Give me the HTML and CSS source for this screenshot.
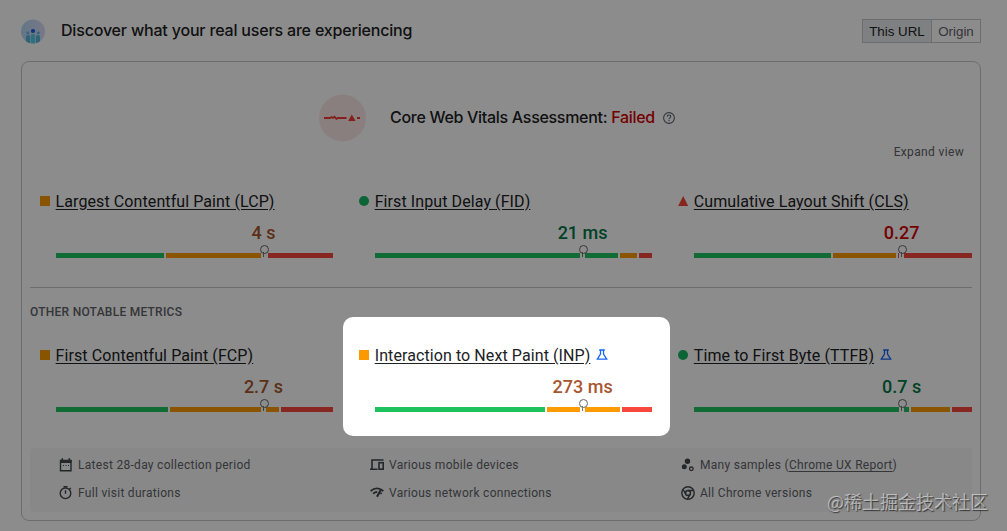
FILE: index.html
```html
<!DOCTYPE html>
<html lang="en">
<head>
<meta charset="UTF-8">
<meta name="viewport" content="width=device-width, initial-scale=1.0">
<title>Core Web Vitals Assessment</title>
<link rel="stylesheet" href="styles.css">
</head>
<body>

<div class="page">
    <header class="header">
        <svg class="header-icon" width="24" height="25" viewBox="0 0 24 25">
            <defs>
                <linearGradient id="sky" x1="0" y1="0" x2="1" y2="0">
                    <stop offset="0" stop-color="#b4d8f5"/>
                    <stop offset="1" stop-color="#dcdaf4"/>
                </linearGradient>
                <clipPath id="disc"><circle cx="12" cy="12.500" r="12"/></clipPath>
            </defs>
            <circle cx="12" cy="12.500" r="12" fill="url(#sky)"/>
            <g clip-path="url(#disc)">
                <path d="M5 18q0-2 2-2t2 2v6H5zM15 18q0-2 2-2t2 2v6h-4z" fill="#55b4da"/>
                <path d="M9.800 17q0-2 2.200-2t2.200 2v8H9.800z" fill="#55cde2"/>
                <circle cx="6.800" cy="14" r="1.400" fill="#5bb7e8"/>
                <circle cx="17.300" cy="14" r="1.400" fill="#5bb7e8"/>
                <circle cx="12" cy="12" r="2.100" fill="#1c5fe0"/>
            </g>
        </svg>
        <h1 class="header-title">Discover what your real users are experiencing</h1>
        <div class="switch">
            <button class="switch-button active">This URL</button>
            <button class="switch-button">Origin</button>
        </div>
    </header>

    <main class="panel">
        <div class="assessment">
            <svg class="assessment-icon" width="48" height="48" viewBox="0 0 48 48">
                <circle cx="24.500" cy="24" r="23.500" fill="#fbe8e7"/>
                <path d="M6 24h6l1.500-1 1.500 1 1.500-1.200 2 2 1.500-.8H28.500M39 24h3" fill="none" stroke="#f03a32" stroke-width="1.800"/>
                <path d="M33.800 20.500l3.700 6.500h-7.400z" fill="#f03a32"/>
            </svg>
            <h2 class="assessment-title">Core Web Vitals Assessment: <span class="failed">Failed</span></h2>
            <svg class="help" width="12" height="12" viewBox="0 0 12 12" fill="none" stroke="#5f6368" stroke-width="1.100">
                <circle cx="6" cy="6" r="5.400"/>
                <path d="M4.200 4.800C4.200 3.600 5 3 6 3s1.800.6 1.800 1.600C7.800 5.800 6 5.900 6 7.200M6 8v1.200"/>
            </svg>
        </div>
        <div class="expand">Expand view</div>

        <section class="metrics">
            <div class="metric average">
                <div class="metric-name"><i class="mark square"></i><a>Largest Contentful Paint (LCP)</a></div>
                <div class="metric-value">4 s</div>
                <div class="bar">
                    <span class="good" style="flex-grow: 108"></span>
                    <span class="medium" style="flex-grow: 100"></span>
                    <span class="poor" style="flex-grow: 65"></span>
                    <b class="pin"></b>
                </div>
            </div>
            <div class="metric fast">
                <div class="metric-name"><i class="mark circle"></i><a>First Input Delay (FID)</a></div>
                <div class="metric-value">21 ms</div>
                <div class="bar">
                    <span class="good" style="flex-grow: 243"></span>
                    <span class="medium" style="flex-grow: 17"></span>
                    <span class="poor" style="flex-grow: 13"></span>
                    <b class="pin"></b>
                </div>
            </div>
            <div class="metric slow">
                <div class="metric-name"><i class="mark triangle"></i><a>Cumulative Layout Shift (CLS)</a></div>
                <div class="metric-value">0.27</div>
                <div class="bar">
                    <span class="good" style="flex-grow: 137"></span>
                    <span class="medium" style="flex-grow: 63"></span>
                    <span class="poor" style="flex-grow: 74"></span>
                    <b class="pin"></b>
                </div>
            </div>
        </section>

        <h3 class="other-title">OTHER NOTABLE METRICS</h3>

        <section class="metrics">
            <div class="metric average">
                <div class="metric-name"><i class="mark square"></i><a>First Contentful Paint (FCP)</a></div>
                <div class="metric-value">2.7 s</div>
                <div class="bar">
                    <span class="good" style="flex-grow: 112"></span>
                    <span class="medium" style="flex-grow: 109"></span>
                    <span class="poor" style="flex-grow: 52"></span>
                    <b class="pin"></b>
                </div>
            </div>
            <div class="metric average">
                <div class="metric-name">
                    <i class="mark square"></i><a>Interaction to Next Paint (INP)</a>
                    <svg class="flask" width="12" height="12" viewBox="0 0 12 12"><path d="M3.200 1h5.600M4.500 1v4L1.300 10.200h9.400L7.500 5V1" fill="none" stroke="#1565f9" stroke-width="1.300"/></svg>
                </div>
                <div class="metric-value">273 ms</div>
                <div class="bar">
                    <span class="good" style="flex-grow: 170"></span>
                    <span class="medium" style="flex-grow: 73"></span>
                    <span class="poor" style="flex-grow: 30"></span>
                    <b class="pin"></b>
                </div>
            </div>
            <div class="metric fast">
                <div class="metric-name">
                    <i class="mark circle"></i><a>Time to First Byte (TTFB)</a>
                    <svg class="flask" width="12" height="12" viewBox="0 0 12 12"><path d="M3.200 1h5.600M4.500 1v4L1.300 10.200h9.400L7.500 5V1" fill="none" stroke="#1565f9" stroke-width="1.300"/></svg>
                </div>
                <div class="metric-value">0.7 s</div>
                <div class="bar">
                    <span class="good" style="flex-grow: 215"></span>
                    <span class="medium" style="flex-grow: 39"></span>
                    <span class="poor" style="flex-grow: 20"></span>
                    <b class="pin"></b>
                </div>
            </div>
        </section>

        <footer class="details">
            <div class="detail">
                <svg width="14" height="14" viewBox="0 0 14 14"><path d="M1.500 2.500h10.500v10.300H1.500z" fill="none" stroke="#424549" stroke-width="1.400"/><path d="M1 2h11.500v3H1zM2.500 .3h1.600V2H2.500zM9.500 .3h1.600V2H9.500z" fill="#424549"/><path d="M4 7.500h1M6.500 7.500h1M9 7.500h1" stroke="#424549" stroke-width="1.200"/></svg>
                Latest 28-day collection period
            </div>
            <div class="detail">
                <svg width="14" height="14" viewBox="0 0 14 14" fill="none" stroke="#424549" stroke-width="1.600"><path d="M13.500 2H2v8.500M0 11.200h7.500"/><rect x="9" y="4.700" width="4.200" height="6.500"/></svg>
                Various mobile devices
            </div>
            <div class="detail">
                <svg width="14" height="14" viewBox="0 0 14 14"><circle cx="6.500" cy="3.200" r="2.700" fill="#424549"/><circle cx="3.300" cy="8.800" r="2.500" fill="#424549"/><circle cx="10.300" cy="10.800" r="1.800" fill="none" stroke="#424549" stroke-width="1.300"/></svg>
                Many samples (<a>Chrome UX Report</a>)
            </div>
            <div class="detail">
                <svg width="14" height="14" viewBox="0 0 14 14" fill="none" stroke="#424549" stroke-width="1.400"><circle cx="6.500" cy="7.300" r="5.300"/><path d="M4.500 .7h4M6.500 4.300v3.500M10.500 3.300l1.300-1.300"/></svg>
                Full visit durations
            </div>
            <div class="detail">
                <svg width="14" height="14" viewBox="0 0 14 14" fill="none" stroke="#424549"><path d="M.6 5Q7-.2 13.400 5M3 7.600Q5 5.800 7.300 5.800" stroke-width="1.800"/><path d="M10.800 4L7 10.800" stroke-width="2.200"/><path d="M10.500 7l1.200.9" stroke-width="1.800"/></svg>
                Various network connections
            </div>
            <div class="detail">
                <svg width="14" height="14" viewBox="0 0 14 14" fill="none" stroke="#424549" stroke-width="1.400"><circle cx="7" cy="7" r="6.200"/><circle cx="7" cy="7" r="2.500"/><path d="M7 4.500h5.500M4.800 8.200L2 3.500M9.200 8.200L6.500 13"/></svg>
                All Chrome versions
            </div>
        </footer>
    </main>
</div>

<!-- dims everything except the INP card -->
<div class="spotlight"></div>
<div class="watermark">@稀土掘金技术社区</div>

</body>
</html>
```
FILE: styles.css
```css
* {
    box-sizing: border-box;
}

body {
    margin: 0;
    background: #fff;
    color: #202124;
    font-family: Roboto, Arial, sans-serif;
    overflow: hidden;
}

.page {
    width: 1007px;
    height: 531px;
    padding: 18px 26px 0 21px;
}

h1, h2, h3 {
    margin: 0;
}

.header {
    display: flex;
    align-items: center;
    height: 26px;
    margin-bottom: 17px;
}

.header-title,
.assessment-title {
    font-family: Inter, sans-serif;
    font-size: 16px;
    font-weight: 500;
    letter-spacing: -0.3px;
    padding-bottom: 2px;
    white-space: nowrap;
}

.header-title {
    margin-left: 16px;
    letter-spacing: -0.18px;
}

.switch {
    display: flex;
    margin-left: auto;
}

.switch-button {
    height: 24px;
    width: 49px;
    padding: 0;
    border: 1px solid #c4c7cb;
    border-left: 0;
    background: #fff;
    color: #5f6368;
    font: 13.33px "Liberation Sans", Arial, sans-serif;
}

.switch-button.active {
    width: 70px;
    border-left: 1px solid #c4c7cb;
    background: #e8eaed;
    color: #202124;
}

.panel {
    height: 460px;
    padding: 32px 8px 0;
    border: 1px solid #c4c7cb;
    border-radius: 8px;
}

.assessment {
    display: flex;
    align-items: center;
    height: 48px;
    padding-left: 288px;
}

.assessment-title {
    margin: 0 8px 0 24px;
}

.failed {
    color: #d50000;
}

.expand {
    padding-right: 8px;
    margin-top: 2px;
    line-height: 16px;
    text-align: right;
    font-size: 12px;
    letter-spacing: 0.35px;
    color: #5f6368;
}

.metrics {
    display: grid;
    grid-template-columns: repeat(3, 293.3px);
    column-gap: 25.8px;
    padding-left: 10px;
    margin-top: 29px;
}

.metric-name {
    display: flex;
    align-items: center;
    height: 24px;
    font-size: 16px;
    letter-spacing: 0.09px;
    white-space: nowrap;
}

.metric-name a {
    text-decoration: underline;
    text-underline-offset: 2px;
}

.mark {
    width: 10px;
    height: 10px;
    margin-right: 5.6px;
}

.square {
    background: #fa9a00;
}

.circle {
    border-radius: 50%;
    background: #18b663;
}

.triangle {
    background: #f44336;
    clip-path: polygon(50% 0, 100% 100%, 0 100%);
}

.flask {
    margin-left: 6px;
}

/* value is centred over the pin, at 75% of the bar */
.metric-value {
    width: 140px;
    margin: 9px 0 9px 153.5px;
    line-height: 22px;
    text-align: center;
    font-size: 18px;
    font-weight: 500;
}

.average .metric-value {
    color: #a8562f;
}

.fast .metric-value {
    color: #017847;
}

.slow .metric-value {
    color: #d50000;
}

.bar {
    position: relative;
    display: flex;
    gap: 2px;
    height: 5px;
    margin-left: 16px;
}

.bar span {
    flex-basis: 0;
}

.good {
    background: #1ec35f;
}

.medium {
    background: #fd9b00;
}

.poor {
    background: #f8483d;
}

.pin {
    position: absolute;
    left: 205px;
    top: 0;
    width: 5px;
    height: 5px;
    background: #fff;
}

.pin::before {
    content: "";
    position: absolute;
    left: -1px;
    top: -8px;
    width: 7px;
    height: 7px;
    border: 1px solid #666;
    border-radius: 50%;
}

.pin::after {
    content: "";
    position: absolute;
    left: 2px;
    top: -1px;
    width: 1px;
    height: 5px;
    background: #777;
}

.other-title {
    margin-top: 29px;
    padding-top: 16px;
    border-top: 1px solid #c4c7cb;
    line-height: 16px;
    font-size: 12px;
    font-weight: 500;
    letter-spacing: 0.25px;
    color: #5f6368;
}

.other-title + .metrics {
    margin-top: 23px;
}

.details {
    display: grid;
    grid-template-columns: repeat(3, 311px);
    grid-auto-rows: 28px;
    height: 64px;
    margin-top: 36px;
    padding: 3px 0 0 29px;
    border-radius: 4px;
    background: #f8f8f8;
}

.detail {
    display: flex;
    align-items: center;
    font-size: 12px;
    letter-spacing: 0.29px;
    color: #5f6368;
    white-space: nowrap;
}

.detail svg {
    margin-right: 5px;
}

.detail a {
    text-decoration: underline;
    text-underline-offset: 2px;
}

.spotlight {
    position: absolute;
    left: 343px;
    top: 317px;
    width: 327px;
    height: 119px;
    border-radius: 10px;
    box-shadow: 0 0 0 1200px rgba(0, 0, 0, 0.45);
}

.watermark {
    position: absolute;
    right: 19px;
    bottom: 17px;
    font: 18px/26px "Noto Sans CJK SC", sans-serif;
    color: rgba(255, 255, 255, 0.5);
    text-shadow: 1px 1px 1px rgba(0, 0, 0, 0.6);
    white-space: nowrap;
}
```
